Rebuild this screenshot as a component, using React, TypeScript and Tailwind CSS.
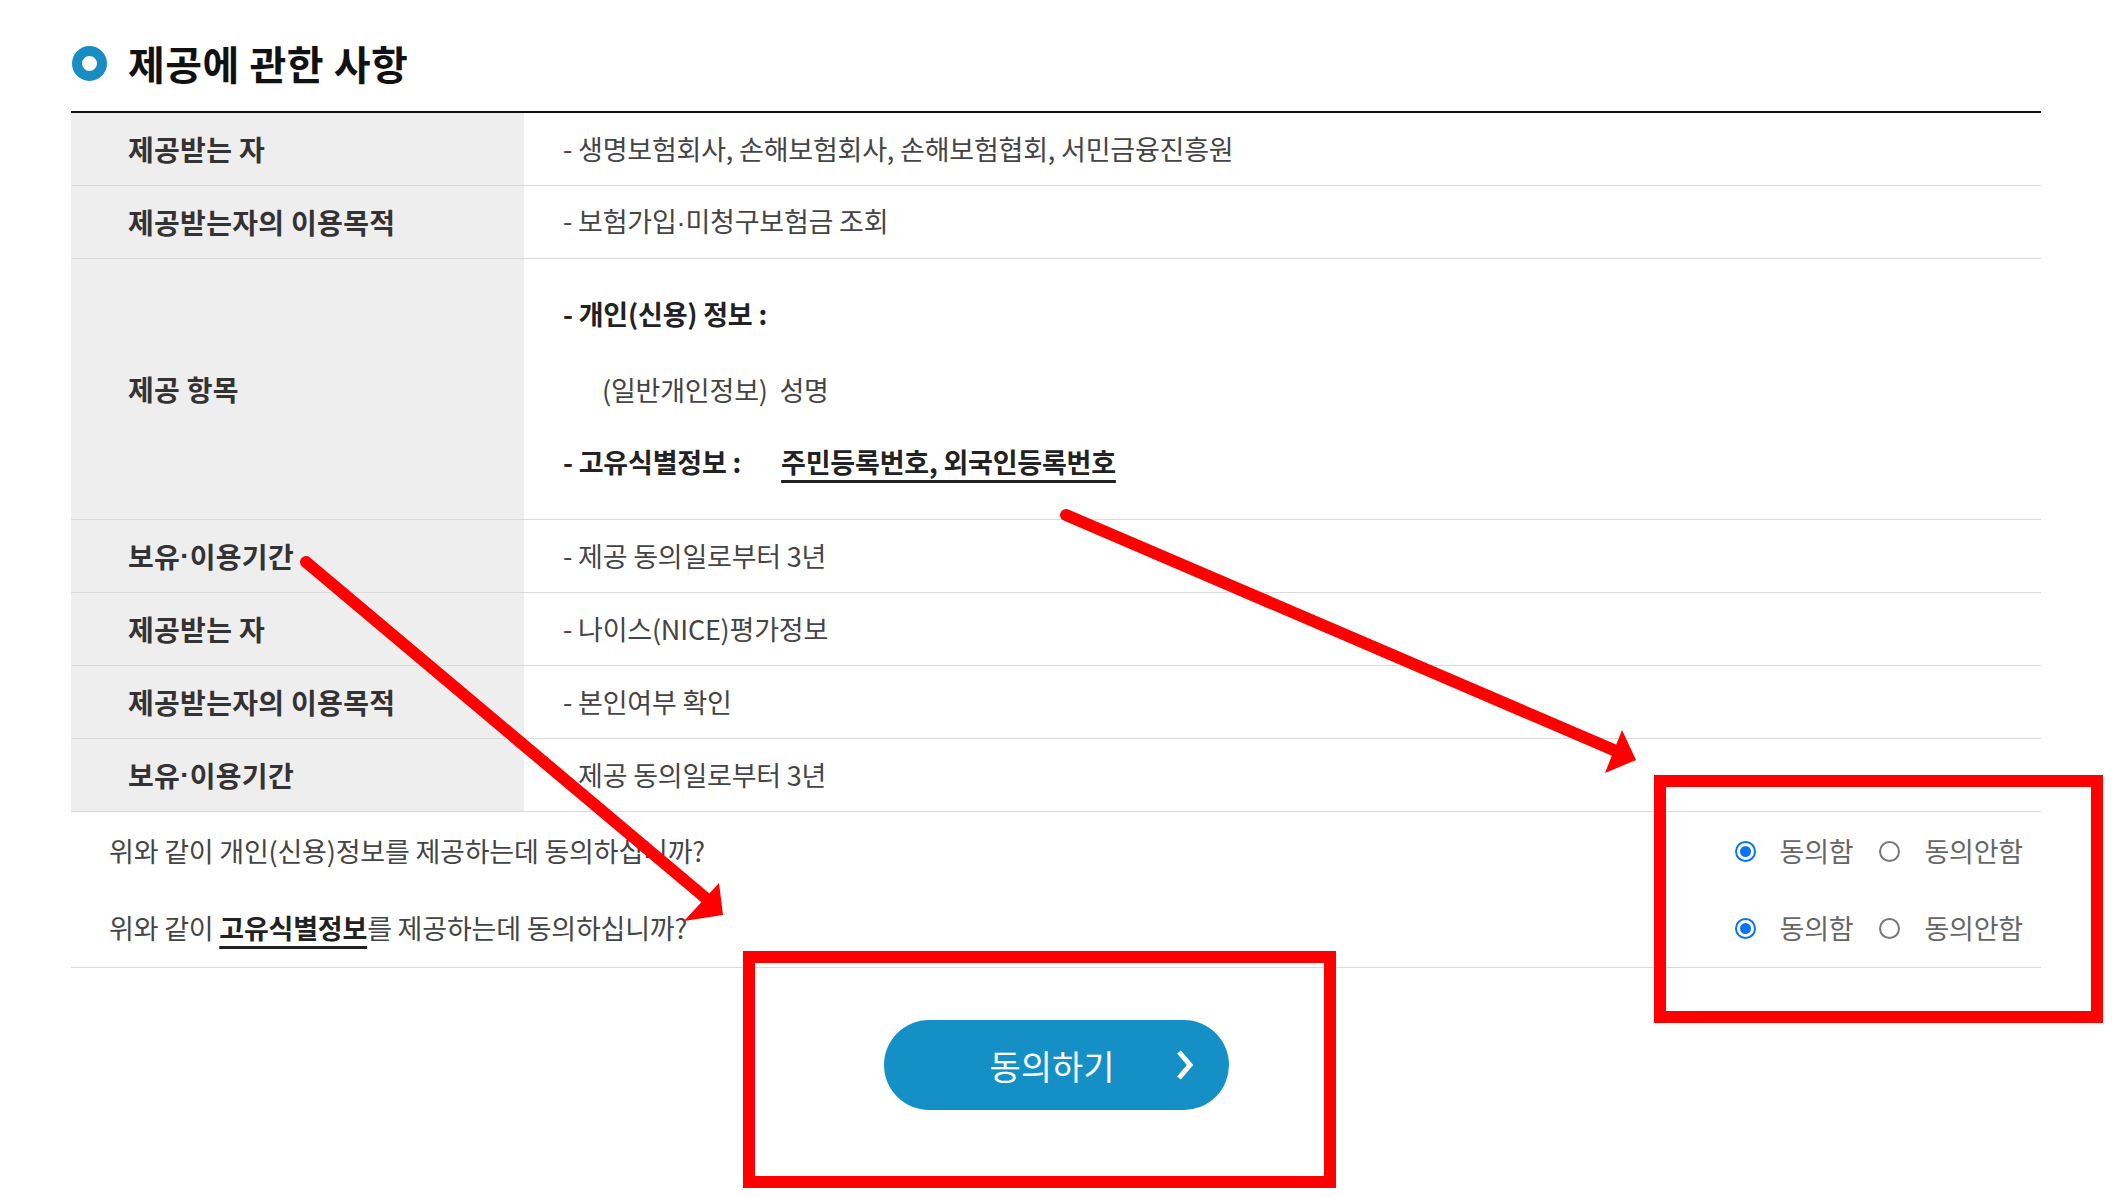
import React from "react";

const topRows = [
  { label: "제공받는 자", value: "- 생명보험회사, 손해보험회사, 손해보험협회, 서민금융진흥원" },
  { label: "제공받는자의 이용목적", value: "- 보험가입·미청구보험금 조회" },
];

const bottomRows = [
  { label: "보유·이용기간", value: "- 제공 동의일로부터 3년" },
  { label: "제공받는 자", value: "- 나이스(NICE)평가정보" },
  { label: "제공받는자의 이용목적", value: "- 본인여부 확인" },
  { label: "보유·이용기간", value: "- 제공 동의일로부터 3년" },
];

// the CJK font draws "·" full width; the source page has a narrow dot
function Dotted({ text }: { text: string }) {
  const parts = text.split("·");
  return (
    <>
      {parts.map((p, i) => (
        <React.Fragment key={i}>
          {i > 0 && <span className="font-['Liberation_Sans',sans-serif]">·</span>}
          {p}
        </React.Fragment>
      ))}
    </>
  );
}

function Row({ label, value }: { label: string; value: string }) {
  return (
    <div className="flex h-[73px] border-b border-[#d9d9d9]">
      <div className="flex w-[453px] items-center bg-[#eeeeee] pl-[57px] text-[28px] font-bold tracking-[0.3px] text-[#333]">
        <Dotted text={label} />
      </div>
      <div className="flex flex-1 items-center pl-[39px] text-[27px] tracking-[-0.2px] text-[#444]">
        <span>
          <Dotted text={value} />
        </span>
      </div>
    </div>
  );
}

function Radio({ checked }: { checked?: boolean }) {
  if (checked) {
    return (
      <span className="flex h-[21px] w-[21px] shrink-0 items-center justify-center rounded-full border-2 border-[#0b75f0] bg-white">
        <span className="h-[11px] w-[11px] rounded-full bg-[#0b75f0]" />
      </span>
    );
  }
  return <span className="block h-[21px] w-[21px] shrink-0 rounded-full border-2 border-[#777] bg-white" />;
}

function Agree() {
  return (
    <div className="flex items-center text-[27px] text-[#666]">
      <Radio checked />
      <span className="ml-[24px]">동의함</span>
      <span className="ml-[26px] flex">
        <Radio />
      </span>
      <span className="ml-[24px]">동의안함</span>
    </div>
  );
}

export default function App() {
  return (
    <div className="relative min-h-[1198px] bg-white font-['Noto_Sans_CJK_KR','Noto_Sans',sans-serif] text-[#333]">
      <div className="ml-[71px] w-[1970px] pt-[38px]">
        {/* Title */}
        <h2 className="flex h-[50px] items-center gap-[21px] pl-px">
          <span className="h-[35px] w-[35px] rounded-full border-[10px] border-[#1a8cc4]" />
          <span className="text-[40px] font-bold leading-none tracking-[0.5px] text-[#111]">제공에 관한 사항</span>
        </h2>

        {/* Table */}
        <div className="mt-[23px] border-t-2 border-[#111]">
          {topRows.map((r, i) => (
            <Row key={i} label={r.label} value={r.value} />
          ))}

          <div className="flex h-[261px] border-b border-[#d9d9d9]">
            <div className="flex w-[453px] items-center bg-[#eeeeee] pl-[57px] text-[28px] font-bold tracking-[0.3px] text-[#333]">
              제공 항목
            </div>
            <div className="flex-1 pl-[39px] pt-[35px] text-[27px] tracking-[-0.2px] text-[#444]">
              <div className="flex h-[40px] items-center font-bold text-[#222]">- 개인(신용) 정보 :</div>
              <div className="mt-[36px] flex h-[40px] items-center pl-[39px] whitespace-pre">(일반개인정보)  성명</div>
              <div className="mt-[32px] flex h-[40px] items-center font-bold text-[#222]">
                <span>- 고유식별정보 :</span>
                <span className="ml-[40px] underline decoration-[3px] underline-offset-[7px]">주민등록번호, 외국인등록번호</span>
              </div>
            </div>
          </div>

          {bottomRows.map((r, i) => (
            <Row key={i} label={r.label} value={r.value} />
          ))}
        </div>

        {/* Consent questions */}
        <div className="border-b border-[#d9d9d9] text-[27px] tracking-[-0.2px] text-[#444]">
          <div className="flex h-[78px] items-center justify-between pl-[38px] pr-[18px]">
            <span>위와 같이 개인(신용)정보를 제공하는데 동의하십니까?</span>
            <Agree />
          </div>
          <div className="flex h-[77px] items-center justify-between pl-[38px] pr-[18px]">
            <span>
              위와 같이{" "}
              <b className="font-bold text-[#222] underline decoration-[3px] underline-offset-[7px]">고유식별정보</b>를
              제공하는데 동의하십니까?
            </span>
            <Agree />
          </div>
        </div>

        {/* Button */}
        <div className="mt-[52px] flex justify-center">
          <button
            type="button"
            className="flex h-[90px] w-[345px] items-center rounded-full bg-[#1490c6] pl-[106px] text-[34px] text-white"
          >
            <span>동의하기</span>
            <svg className="ml-[58px]" width="22" height="32" viewBox="0 0 22 32" fill="none">
              <path d="M6 3 L17 16 L6 29" stroke="white" strokeWidth="5" strokeLinejoin="miter" />
            </svg>
          </button>
        </div>
      </div>

      {/* Red annotations drawn over the screenshot */}
      <svg
        className="pointer-events-none absolute left-0 top-0"
        width="2112"
        height="1198"
        viewBox="0 0 2112 1198"
        fill="none"
      >
        <line x1="306" y1="562" x2="708" y2="900" stroke="#ff0000" strokeWidth="12" strokeLinecap="round" />
        <polygon points="723,915 719,883 684,921" fill="#ff0000" />
        <line x1="1066" y1="515" x2="1616" y2="751" stroke="#ff0000" strokeWidth="12" strokeLinecap="round" />
        <polygon points="1636,760 1622,730 1605,773" fill="#ff0000" />
        <rect x="1660" y="781" width="437" height="236" stroke="#ff0000" strokeWidth="12" />
        <rect x="749" y="957" width="581" height="225" stroke="#ff0000" strokeWidth="12" />
      </svg>
    </div>
  );
}
